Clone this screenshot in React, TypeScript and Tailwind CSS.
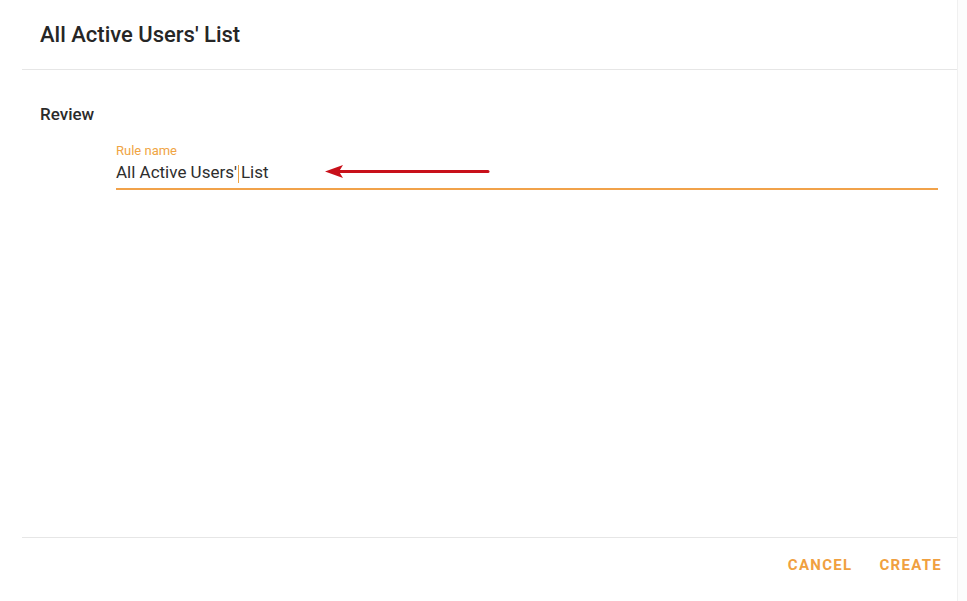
import React from 'react';

// Annotation arrow drawn over the form (red, pointing left at the field value)
function PointerArrow() {
    return (
        <svg
            className="absolute left-[323px] top-[163px]"
            width="168"
            height="17"
            viewBox="0 0 168 17"
            fill="none"
        >
            <path d="M16 8.5 H165" stroke="#c8101a" strokeWidth="3" strokeLinecap="round" />
            <path d="M2 8.5 L20 2 L16 8.5 L20 15 Z" fill="#c8101a" />
        </svg>
    );
}

export default function App() {
    return (
        <div
            className="relative flex h-[601px] w-[967px] bg-white text-[#2b2b2b]"
            style={{ fontFamily: 'Roboto, "Liberation Sans", sans-serif' }}
        >
            <div className="flex w-[958px] flex-col border-r border-[#f0f0f0] pl-[22px]">
                {/* Kopfzeile */}
                <header className="flex h-[70px] items-center border-b border-[#e6e6e6] pl-[18px]">
                    <h1 className="text-[22px] font-medium text-[#262626]">All Active Users' List</h1>
                </header>

                {/* Inhalt */}
                <section className="flex-1 pl-[18px] pr-[19px] pt-[32px]">
                    <h2 className="text-[17px] leading-6 font-medium text-[#2b2b2b]">Review</h2>
                    <div className="ml-[76px] mt-[17px]">
                        <label className="block text-[13px] leading-4 text-[#f0a443]">Rule name</label>
                        <div className="mt-[1px] border-b-2 border-[#f1a24a] pb-[4px] text-[17px] leading-6 text-[#2e2e2e]">
                            All Active Users'
                            <span className="relative inline-block w-[4px] align-middle">
                                <span className="absolute left-[1px] top-[-9px] h-[18px] w-px bg-[#f0a443]" />
                            </span>
                            List
                        </div>
                    </div>
                </section>

                {/* Fußzeile mit Aktionen */}
                <footer className="flex h-[64px] items-start justify-end gap-[27px] border-t border-[#e6e6e6] pr-[15px] pt-[19px]">
                    <button type="button" className="text-[15px] leading-4 font-bold tracking-[1.3px] text-[#f0a040]">
                        CANCEL
                    </button>
                    <button type="button" className="text-[15px] leading-4 font-bold tracking-[1.3px] text-[#f0a040]">
                        CREATE
                    </button>
                </footer>
            </div>
            <div className="flex-1 bg-[#fcfcfc]" />

            <PointerArrow />
        </div>
    );
}
